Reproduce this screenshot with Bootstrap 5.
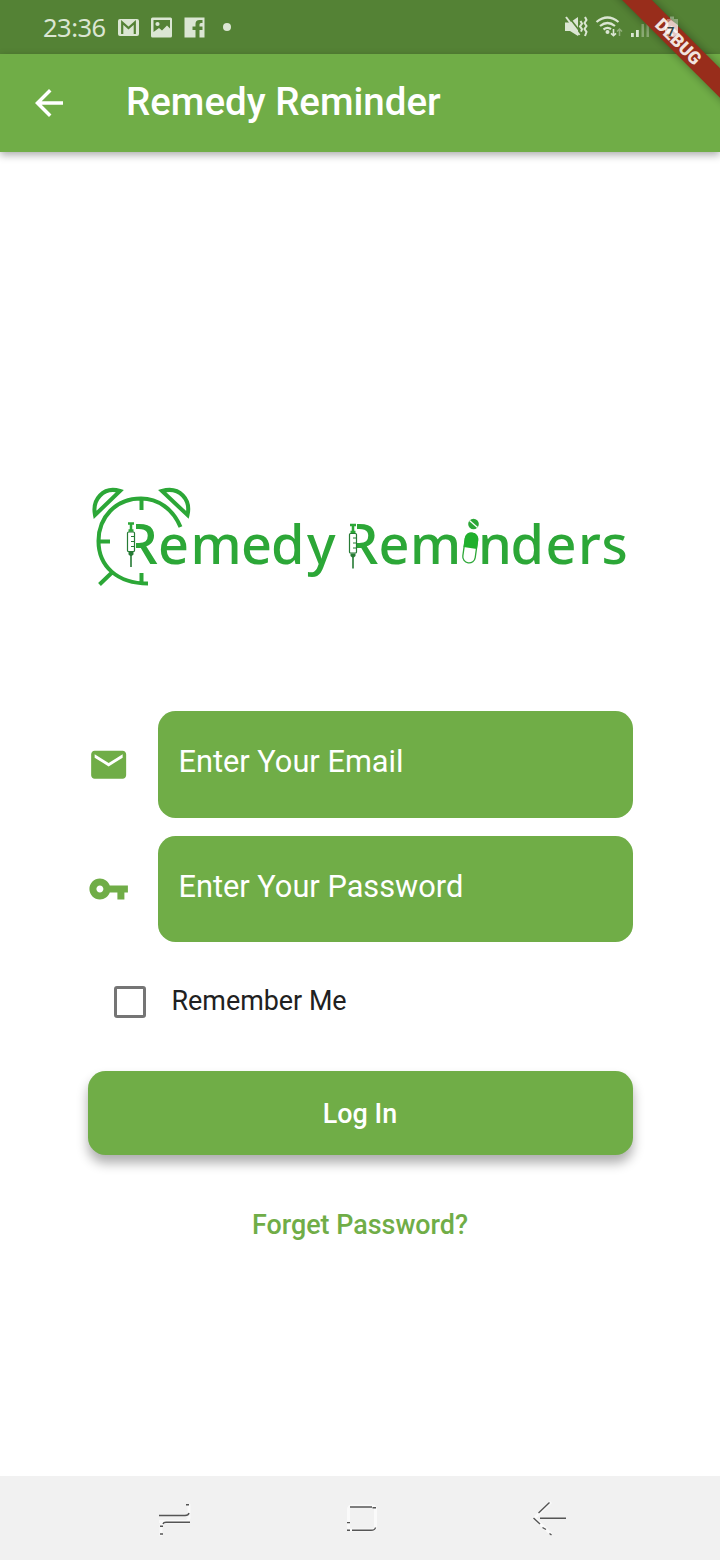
<!DOCTYPE html>
<html lang="en">
<head>
<meta charset="utf-8">
<meta name="viewport" content="width=device-width, initial-scale=1">
<title>Remedy Reminder</title>
<link href="https://cdn.jsdelivr.net/npm/bootstrap@5.3.0/dist/css/bootstrap.min.css" rel="stylesheet">
<style>
  :root { --leaf: #70ad47; --leaf-dark: #548235; }
  body { font-family: Roboto, "Liberation Sans", sans-serif; background: #fff; }
  svg { display: block; flex: none; }
  .screen { height: 1560px; }
  .status { height: 54px; background: var(--leaf-dark); color: #dbe6d3; padding: 0 41px 0 43px; }
  .clock { font: 400 25.500px/1 "Noto Sans", sans-serif; width: 75px; letter-spacing: -.5px; padding-top: 1px; }
  .appbar { height: 98px; background: var(--leaf); padding: 0 0 0 28px; box-shadow: 0 3px 8px rgba(0,0,0,.33); }
  .appbar h1 { font-size: 38.5px; line-height: 46px; font-weight: 500; letter-spacing: 0; margin-left: 56px; padding-bottom: 2px; }
  .ribbon-layer { width: 110px; height: 110px; top: 0; right: 0; }
  .login { padding: 328px 87.5px 0; }
  .brand { margin-left: -7.5px; }
  .login-form { margin-top: 121px; }
  .field-icon { width: 70px; flex: none; }
  .form-control.entry { height: 107px; border: 0; border-radius: 17.5px; background: var(--leaf); color: #fff; font-size: 30.75px; padding: 0 21px 6px; box-shadow: none; }
  .form-control.entry.second { height: 106.5px; padding-bottom: 5px; }
  .form-control.entry::placeholder { color: #fff; opacity: 1; }
  .form-check-input.tick { width: 32px; height: 32px; margin: 0; border: 3.5px solid #757575; border-radius: 3px; background-color: #fff; }
  .remember { margin: 43.5px 0 0 26px; font-size: 26.9px; color: #212121; gap: 26px; height: 32px; }
  .btn.submit { height: 84px; margin-top: 53.500px; border: 0; border-radius: 17.5px; background: var(--leaf); color: #fff; font-size: 26.9px; font-weight: 500; padding-top: 8px; box-shadow: 0 8px 12px rgba(0,0,0,.32); }
  .forgot { color: var(--leaf); font-size: 26.9px; font-weight: 500; margin-top: 50px; line-height: 40px; }
  .softkeys { height: 84px; background: #f1f1f1; }
</style>
</head>
<body>
<div class="screen d-flex flex-column position-relative overflow-hidden">
  <div class="status d-flex align-items-center">
    <span class="clock">23:36</span>
    <!-- mail, gallery and facebook notifications -->
    <svg width="114" height="24" viewBox="118 15 114 24" fill="#dbe6d3">
      <rect x="118" y="19" width="21" height="17" rx="2"/>
      <path d="M122.200 34V22.500L128.500 28L134.800 22.500V34" fill="none" stroke="#548235" stroke-width="2.200"/>
      <path fill-rule="evenodd" d="M152.500 17.500H170.500Q172 17.500 172 19V36Q172 37.500 170.500 37.500H152.500Q151 37.500 151 36V19Q151 17.500 152.500 17.500ZM153.500 20V32L159 28L162 30.500L167 25.500L170 28.500V20Z"/>
      <circle cx="157.500" cy="24" r="2.100"/>
      <path d="M184.500 17.500H204.500V37.500H199.500V30H202.500V26.500H199.500V24.500Q199.500 23 201 23H202.500V20H199.500Q195.500 20 195.500 24V26.500H192.500V30H195.500V37.500H184.500Z"/>
      <circle cx="227" cy="27" r="4"/>
    </svg>
    <!-- vibrate, wifi, signal and battery -->
    <svg class="ms-auto" width="116" height="26" viewBox="563 14 116 26" fill="#dbe6d3">
      <path d="M565 22.500H570L578 17V36L570 31H565Z"/>
      <path d="M568 16L582 34" stroke="#548235" stroke-width="1.600"/>
      <path d="M566 17L579.500 35" stroke="#dbe6d3" stroke-width="2"/>
      <g fill="none" stroke="#dbe6d3" stroke-width="2">
        <path d="M580.500 21l1.500 2.700-2 2.700 2 2.700-1 2.500M585 17l1.500 3-2 3 2 3-2 3 2 3-1.500 4"/>
        <path d="M596.500 22Q607.500 13 618.500 22M600 26Q607.500 20 615 26M603.500 29.500Q607.500 26.500 611 29.200" stroke-width="2.200"/>
        <path d="M613.500 29V35.500M611 33.300L613.500 35.700L616 33.300" stroke-width="1.600"/>
        <path d="M619.500 36V29M617 31.500L619.500 29L622 31.500" stroke-width="1.500" opacity=".45"/>
      </g>
      <circle cx="607.500" cy="32" r="2"/>
      <path d="M631 33h2.800v4H631zM636 30h2.800v7H636z"/>
      <path d="M641.500 24h2.500v13h-2.500zM646.500 17.500h2.500v19.500h-2.500z" opacity=".4"/>
    </svg>
  </div>

  <header class="appbar d-flex align-items-center text-white">
    <svg width="42" height="42" viewBox="0 0 24 24" fill="#fff"><path d="M20 11H7.830l5.590-5.590L12 4l-8 8 8 8 1.410-1.410L7.830 13H20v-2z"/></svg>
    <h1 class="mb-0">Remedy Reminder</h1>
  </header>

  <main class="login flex-grow-1 d-flex flex-column">
    <svg class="brand" width="560" height="110" viewBox="80 480 560 110" role="img" aria-label="Remedy Reminders">
      <g fill="none" stroke="#2ca737" stroke-width="4">
        <path d="M180.500 527C173 509 158 498.500 141 498.500C116 498.500 98.500 517 98.500 541C98.500 566 117 583.500 148 583.500M141.500 498V510M98.500 541.500H110M141.500 573V583M112 572.500L99.500 584.500"/>
        <path d="M95 515C92 500 103 486 120 491Z"/>
        <path d="M187.500 515C191 500 180 486 162 491Z"/>
      </g>
      <g font-family="Noto Sans, sans-serif" font-size="54" font-weight="500" fill="#2ca737">
        <text x="122.500" y="563.500" font-size="56">R</text>
        <text x="158 190.500 241 271 307" y="563.500">emedy</text>
        <text x="343" y="563.500" font-size="56">R</text>
        <text x="378.500 410" y="563.500">em</text>
        <text x="478 510.500 545.500 578 601.500" y="563.500">nders</text>
      </g>
      <path d="M122 518H136V568H122ZM343 518H357V568H343Z" fill="#fff"/>
      <defs>
        <g id="syringe">
          <path d="M128 523.500H134M131 524V530M128.500 530.500H133.500" stroke="#2ca737" stroke-width="2.500"/>
          <rect x="127.500" y="532" width="7" height="19.500" rx="1" fill="#fff" stroke="#267b35" stroke-width="1.200"/>
          <path d="M131 536.500H134M131 541.500H134M131 546.500H134" stroke="#267b35"/>
          <path d="M128.500 552H133.500V554.500L131.800 556V567H130.200V556L128.500 554.500Z" fill="#267b35"/>
        </g>
      </defs>
      <use href="#syringe"/><use href="#syringe" x="222" y="1.500"/>
      <circle cx="473.500" cy="524" r="5.300" fill="#2ca737"/>
      <path d="M469.500 520.500L477.500 527.500" stroke="#fff" stroke-width="1.300"/>
      <g transform="rotate(8 470 548)">
        <rect x="464" y="533" width="12.500" height="30" rx="6.200" fill="#fff" stroke="#2ca737" stroke-width="1.300"/>
        <path d="M463.500 548V539Q464 532.500 470.200 532.500Q476.500 532.500 477 539V548Z" fill="#20b02d"/>
      </g>
    </svg>

    <form class="login-form d-flex flex-column">
      <div class="d-flex align-items-center">
        <label class="field-icon" for="email" aria-label="Email">
          <svg width="42" height="42" viewBox="0.2 0.2 24 24" fill="#70ad47"><path d="M20 4H4c-1.100 0-1.990.9-1.990 2L2 18c0 1.100.9 2 2 2h16c1.100 0 2-.9 2-2V6c0-1.100-.9-2-2-2zm0 4l-8 5-8-5V6l8 5 8-5v2z"/></svg>
        </label>
        <input class="form-control entry" id="email" type="email" placeholder="Enter Your Email">
      </div>
      <div class="d-flex align-items-center" style="margin-top:17.500px">
        <label class="field-icon" for="password" aria-label="Password">
          <svg width="42" height="42" viewBox="0.2 0 24 24" fill="#70ad47"><path d="M12.650 10C11.830 7.670 9.610 6 7 6c-3.310 0-6 2.690-6 6s2.690 6 6 6c2.610 0 4.830-1.670 5.650-4H17v4h4v-4h2v-4H12.650zM7 14c-1.100 0-2-.9-2-2s.9-2 2-2 2 .9 2 2-.9 2-2 2z"/></svg>
        </label>
        <input class="form-control entry second" id="password" type="password" placeholder="Enter Your Password">
      </div>
      <div class="remember d-flex align-items-center">
        <input class="form-check-input tick" id="remember" type="checkbox">
        <label for="remember">Remember Me</label>
      </div>
      <button class="btn submit w-100" type="button">Log In</button>
      <a class="forgot text-center text-decoration-none" href="#">Forget Password?</a>
    </form>
  </main>

  <nav class="softkeys" aria-label="System navigation">
    <svg width="720" height="84" viewBox="0 1476 720 84" fill="none">
      <g stroke="#fff" stroke-width="3" opacity=".65">
        <path d="M159 1521.500H186Q189 1521 189 1517V1504M190 1522H164Q161 1523 161 1527V1536"/>
        <rect x="348.500" y="1506" width="27" height="24" rx="3"/>
        <path d="M551 1502L534.500 1518L551 1534"/>
      </g>
      <g stroke="#555" stroke-width="1.400">
        <path d="M159 1515.500H185Q188.500 1515.500 189 1513M186 1504.700H189M190 1522.300H166Q163.500 1522.300 163 1524M160 1526.300H163M160 1534H163"/>
        <path d="M350 1507H372M372.500 1507.800H376M347 1522.600H350M347 1530.300H350M352 1530.300H371Q375 1530.300 375.500 1527.500"/>
        <path d="M540 1518.300H566M538.500 1513L549.500 1502.500M533.500 1518L540 1524M542.500 1527.500L546 1529.500M549.500 1533.500L551.500 1535"/>
      </g>
    </svg>
  </nav>

  <!-- corner ribbon lies over both bars -->
  <svg class="ribbon-layer position-absolute" viewBox="610 0 110 110">
    <defs><filter id="soft" x="-20%" y="-100%" width="140%" height="300%"><feGaussianBlur stdDeviation="4"/></filter></defs>
    <g transform="translate(679 42) rotate(45)">
      <rect x="-90" y="-10.500" width="180" height="21" fill="#000" opacity=".35" filter="url(#soft)"/>
      <rect x="-90" y="-10.500" width="180" height="21" fill="#982d1b"/>
    </g>
    <path d="M667 19H670V16.500H674V19H678V37H667Z" fill="#fff" opacity=".35"/>
    <text transform="translate(678.500 41.500) rotate(45)" y="6.300" text-anchor="middle" font-family="Roboto, sans-serif" font-size="17.800" font-weight="900" fill="#f1e4df">DEBUG</text>
    <path d="M665 25L671 20L678 25V34L673 37L665 32Z" fill="#fff" opacity=".6"/>
    <text x="667" y="36" font-family="Roboto, sans-serif" font-size="13" font-weight="700" fill="#344">7</text>
  </svg>
</div>
<script src="https://cdn.jsdelivr.net/npm/bootstrap@5.3.0/dist/js/bootstrap.bundle.min.js"></script>
</body>
</html>
